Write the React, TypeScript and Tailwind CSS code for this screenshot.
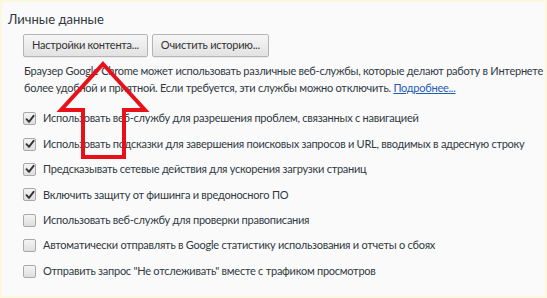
import React from "react";

const items: { label: string; checked: boolean }[] = [
  { label: "Использовать веб-службу для разрешения проблем, связанных с навигацией", checked: true },
  { label: "Использовать подсказки для завершения поисковых запросов и URL, вводимых в адресную строку", checked: true },
  { label: "Предсказывать сетевые действия для ускорения загрузки страниц", checked: true },
  { label: "Включить защиту от фишинга и вредоносного ПО", checked: true },
  { label: "Использовать веб-службу для проверки правописания", checked: false },
  { label: "Автоматически отправлять в Google статистику использования и отчеты о сбоях", checked: false },
  { label: "Отправить запрос \"Не отслеживать\" вместе с трафиком просмотров", checked: false },
];

function Checkbox({ checked }: { checked: boolean }) {
  return (
    <div className="w-[13px] h-[13px] shrink-0 rounded-[2px] border border-[#a9a9a9] bg-gradient-to-b from-[#f4f4f4] to-[#dedede] flex items-center justify-center">
      {checked && (
        <svg width="10" height="10" viewBox="0 0 10 10">
          <path d="M1.5 5.2 L4 7.8 L8.6 1.8" fill="none" stroke="#333" strokeWidth="1.9" strokeLinecap="round" strokeLinejoin="round" />
        </svg>
      )}
    </div>
  );
}

function Btn({ children }: { children: React.ReactNode }) {
  return (
    <div className="h-[23px] px-[8px] flex items-center rounded-[2px] border border-[#b5b5b5] bg-gradient-to-b from-[#f6f6f6] to-[#e2e2e2] text-[11px] tracking-[-0.25px] text-[#333] shadow-[0_1px_0_rgba(0,0,0,0.06)]">
      {children}
    </div>
  );
}

export default function App() {
  return (
    <div className="relative w-[547px] h-[298px] overflow-hidden bg-[#fafafa] border-2 border-[#fbf8df] text-[#303942]" style={{ fontFamily: "Lato, 'Noto Sans', sans-serif" }}>
      <div className="flex flex-col pl-[6px] pt-[7px]">
        <div className="text-[13px] leading-[20px] text-[#303942]">Личные данные</div>
        <div className="flex gap-[4px] ml-[15px] mt-[5px]">
          <Btn>Настройки контента...</Btn>
          <Btn>Очистить историю...</Btn>
        </div>
        <div className="ml-[16px] mt-[5px] text-[11px] tracking-[-0.25px] leading-[17px] w-[525px]">
          Браузер Google Chrome может использовать различные веб-службы, которые делают работу в Интернете более удобной и приятной. Если требуется, эти службы можно отключить.{" "}
          <span className="text-[#1f5cb3] underline">Подробнее...</span>
        </div>
        <div className="flex flex-col ml-[15px] mt-[10px]">
          {items.map((it, i) => (
            <div key={i} className="flex items-center h-[25.4px] gap-[7px] text-[11px] tracking-[-0.25px]">
              <Checkbox checked={it.checked} />
              <span className="whitespace-nowrap">{it.label}</span>
            </div>
          ))}
        </div>
      </div>
      <svg className="absolute left-0 top-0 pointer-events-none" width="547" height="298">
        <polygon points="101,62 143,108 122,108 122,155 81,155 81,108 59,108" fill="none" stroke="#e8101a" strokeWidth="4" strokeLinejoin="miter" />
      </svg>
    </div>
  );
}
